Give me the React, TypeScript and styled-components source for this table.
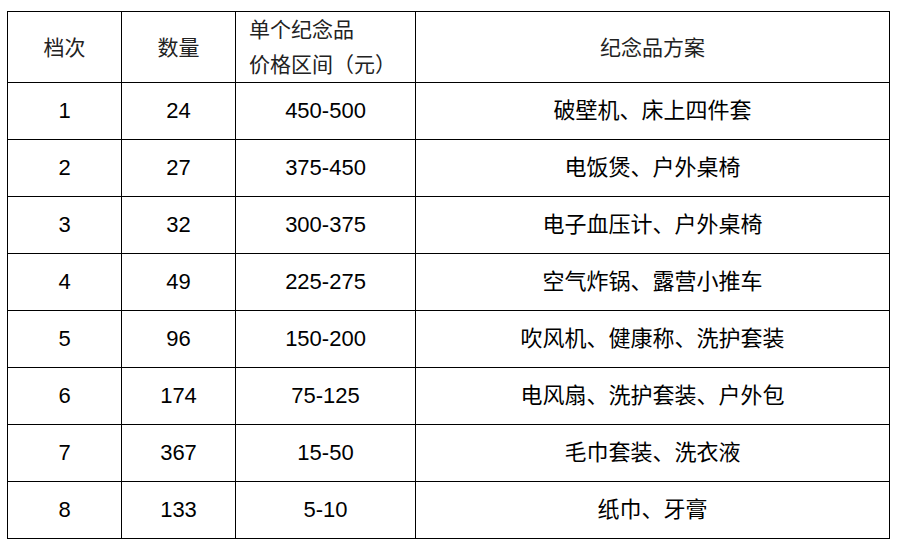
import styled, { createGlobalStyle } from "styled-components";

type Tier = {
  level: number;
  count: number;
  range: string;
  plan: string;
};

const tiers: Tier[] = [
  { level: 1, count: 24, range: "450-500", plan: "破壁机、床上四件套" },
  { level: 2, count: 27, range: "375-450", plan: "电饭煲、户外桌椅" },
  { level: 3, count: 32, range: "300-375", plan: "电子血压计、户外桌椅" },
  { level: 4, count: 49, range: "225-275", plan: "空气炸锅、露营小推车" },
  { level: 5, count: 96, range: "150-200", plan: "吹风机、健康称、洗护套装" },
  { level: 6, count: 174, range: "75-125", plan: "电风扇、洗护套装、户外包" },
  { level: 7, count: 367, range: "15-50", plan: "毛巾套装、洗衣液" },
  { level: 8, count: 133, range: "5-10", plan: "纸巾、牙膏" },
];

export default function App() {
  return (
    <>
      <GlobalStyle />
      <Page>
        <Table>
          <colgroup>
            <col style={{ width: 114 }} />
            <col style={{ width: 114 }} />
            <col style={{ width: 180 }} />
            <col />
          </colgroup>
          <thead>
            <tr>
              <HeadCell>档次</HeadCell>
              <HeadCell>数量</HeadCell>
              <HeadCell $left>
                单个纪念品
                <br />
                价格区间（元）
              </HeadCell>
              <HeadCell>纪念品方案</HeadCell>
            </tr>
          </thead>
          <tbody>
            {tiers.map((t) => (
              <tr key={t.level}>
                <Cell>{t.level}</Cell>
                <Cell>{t.count}</Cell>
                <Cell>{t.range}</Cell>
                <Cell>{t.plan}</Cell>
              </tr>
            ))}
          </tbody>
        </Table>
      </Page>
    </>
  );
}

const GlobalStyle = createGlobalStyle`
  body {
    margin: 0;
    background: #ffffff;
  }
`;

const Page = styled.div`
  padding: 11px 0 0 7px;
`;

const Table = styled.table`
  border-collapse: collapse;
  table-layout: fixed;
  width: 883px;
  font-family: "Liberation Sans", "Noto Sans CJK SC", sans-serif;
  font-size: 22px;
  color: #000;
`;

const HeadCell = styled.th<{ $left?: boolean }>`
  border: 1px solid #000;
  height: 70px;
  padding: 0 0 0 ${({ $left }) => ($left ? "13px" : "0")};
  font-weight: 400;
  font-size: 21px;
  line-height: 35px;
  text-align: ${({ $left }) => ($left ? "left" : "center")};
  color: #222;
`;

const Cell = styled.td`
  border: 1px solid #000;
  height: 56px;
  padding: 0;
  text-align: center;
  line-height: 24px;
`;
